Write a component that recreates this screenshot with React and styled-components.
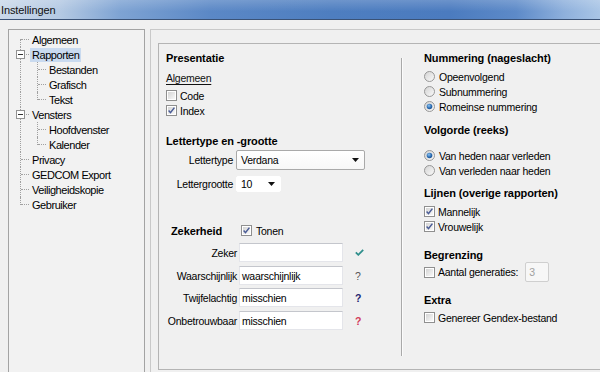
import React from 'react'
import styled, { createGlobalStyle } from 'styled-components'

const GlobalStyle = createGlobalStyle`
  html, body {
    margin: 0;
    padding: 0;
    background: #f0f0f0;
  }
  body {
    width: 600px;
    height: 372px;
    overflow: hidden;
    font-family: "Liberation Sans", Arial, sans-serif;
    font-size: 10.5px;
    letter-spacing: -0.25px;
    color: #000;
  }
`

const Window = styled.div`
  display: flex;
  flex-direction: column;
  width: 600px;
  height: 372px;
  overflow: hidden;
`

const TitleBar = styled.div`
  height: 19px;
  flex-shrink: 0;
  display: flex;
  align-items: center;
  padding-left: 1px;
  font-size: 11px;
  letter-spacing: -0.1px;
  color: #101010;
  border-bottom: 1px solid #3a5276;
  background:
    linear-gradient(180deg, rgba(255,255,255,0.18) 0%, rgba(255,255,255,0) 60%),
    linear-gradient(90deg, #cbd9ea 0%, #b4c9e3 10%, #7ea3d3 20%, #5b88c6 35%, #4e7ec0 55%, #4b7bbf 75%, #5d8ac8 86%, #8eb0dc 94%, #a9c5e6 100%);
`

const Body = styled.div`
  flex: 1;
  display: flex;
  gap: 5px;
  padding: 9px 0 0 8px;
  min-height: 0;
`

const TreePanel = styled.div`
  width: 137px;
  flex-shrink: 0;
  box-sizing: border-box;
  border: 1px solid #a3a3a3;
  border-bottom: none;
  background: #f2f2f2;
  padding: 2px 0 0 4px;
`

const TreeRow = styled.div`
  display: flex;
  align-items: center;
  height: 15px;
`

const Guide = styled.div`
  position: relative;
  width: 17px;
  height: 15px;
  flex-shrink: 0;

  &::before {
    content: '';
    display: ${p => (p.$line ? 'block' : 'none')};
    position: absolute;
    left: 7px;
    top: ${p => (p.$line === 'first' ? '7px' : '0')};
    height: ${p => (p.$line === 'first' || p.$line === 'last' ? '8px' : '15px')};
    border-left: 1px dotted #a0a0a0;
  }

  &::after {
    content: '';
    display: ${p => (p.$branch ? 'block' : 'none')};
    position: absolute;
    left: 8px;
    top: 7px;
    width: 8px;
    border-top: 1px dotted #a0a0a0;
  }
`

const Expander = styled.svg`
  position: absolute;
  left: 3px;
  top: 3px;
  z-index: 1;
`

const TreeLabel = styled.span`
  padding: 0 2px;
  height: 14px;
  line-height: 14px;
  white-space: nowrap;
  font-size: 11px;
  letter-spacing: -0.45px;
  background: ${p => (p.$selected ? '#c9daef' : 'transparent')};
`

const OuterPanel = styled.div`
  flex: 1;
  display: flex;
  flex-direction: column;
  border-left: 1px solid #c9c9c9;
  border-top: 1px solid #c9c9c9;
  padding: 13px 0 2px 7px;
  min-width: 0;
`

const InnerPanel = styled.div`
  flex: 1;
  display: flex;
  border: 1px solid #b4b4b4;
  border-right: none;
  margin-right: -20px;
  background: #f0f0f0;
`

const LeftCol = styled.div`
  width: 242px;
  flex-shrink: 0;
  box-sizing: border-box;
  padding-left: 7px;
  display: flex;
  flex-direction: column;
`

const Divider = styled.div`
  width: 1px;
  margin: 14px 0 13px;
  background: #a9a9a9;
  box-shadow: 1px 0 0 #fbfbfb;
`

const RightCol = styled.div`
  flex: 1;
  padding-left: 22px;
  display: flex;
  flex-direction: column;
`

const Heading = styled.div`
  margin-top: ${p => p.$top || 0}px;
  height: 14px;
  line-height: 14px;
  font-weight: bold;
  font-size: 11px;
  letter-spacing: -0.1px;
  white-space: nowrap;
`

const SubLink = styled.div`
  margin-top: ${p => p.$top || 0}px;
  height: 14px;
  line-height: 14px;
  text-decoration: underline;
  text-underline-offset: 2px;
  color: #111;
`

const OptionRow = styled.div`
  margin-top: ${p => p.$top || 0}px;
  height: ${p => p.$h || 15}px;
  display: flex;
  align-items: center;
  white-space: nowrap;
`

const OptionText = styled.span`
  margin-left: ${p => p.$gap || 3}px;
  line-height: 14px;
`

const FormRow = styled.div`
  margin-top: ${p => p.$top || 0}px;
  height: ${p => p.$h}px;
  display: flex;
  align-items: center;
`

const FieldLabel = styled.span`
  width: ${p => p.$w}px;
  text-align: right;
  margin-right: ${p => p.$gap}px;
  white-space: nowrap;
  flex-shrink: 0;
`

const Combo = styled.div`
  box-sizing: border-box;
  width: ${p => p.$w}px;
  height: 100%;
  display: flex;
  align-items: center;
  justify-content: space-between;
  padding: 0 5px 0 4px;
  border: 1px solid ${p => (p.$flat ? '#ffffff' : '#a9a9a9')};
  border-radius: 2px;
  background: ${p => (p.$flat ? '#ffffff' : 'linear-gradient(180deg, #ffffff 0%, #f7f7f7 100%)')};
`

const ZekerRow = styled.div`
  margin-top: 31px;
  height: 15px;
  display: flex;
  align-items: center;
  padding-left: 5px;
`

const ZekerHeading = styled.span`
  width: 70px;
  font-weight: bold;
  font-size: 11px;
  letter-spacing: -0.1px;
`

const TextField = styled.div`
  box-sizing: border-box;
  width: 104px;
  height: 100%;
  padding: 0 2px;
  display: flex;
  align-items: center;
  background: #fff;
  border: 1px solid #e4e5ea;
  border-top-color: #c4c6cc;
`

const Marker = styled.span`
  margin-left: 12px;
  width: 10px;
  display: flex;
  align-items: center;
  font-weight: ${p => (p.$bold ? 'bold' : 'normal')};
  color: ${p => p.$color};
`

const SmallInput = styled.div`
  box-sizing: border-box;
  margin-left: 7px;
  width: 24px;
  height: 20px;
  padding-left: 3px;
  display: flex;
  align-items: center;
  border: 1px solid #cfcfcf;
  border-radius: 2px;
  background: #f7f7f7;
  color: #a0a0a0;
`

const CheckBox = ({ checked }) => (
  <svg width="11" height="11" viewBox="0 0 11 11">
    <defs>
      <linearGradient id="cbfill" x1="0" y1="0" x2="1" y2="1">
        <stop offset="0" stopColor="#d4d4d4" />
        <stop offset="1" stopColor="#f9f9f9" />
      </linearGradient>
    </defs>
    <rect x="0.5" y="0.5" width="10" height="10" fill="#fff" stroke="#8f8f8f" />
    <rect x="2" y="2" width="7" height="7" fill="url(#cbfill)" />
    {checked && (
      <path d="M2.6 5.6 L4.5 7.7 L8.4 2.6" fill="none" stroke="#4a5c96" strokeWidth="1.5" />
    )}
  </svg>
)

const RadioDot = ({ checked }) => (
  <svg width="11" height="11" viewBox="0 0 11 11">
    <defs>
      <linearGradient id="rbfill" x1="0" y1="0" x2="1" y2="1">
        <stop offset="0" stopColor="#d2d2d2" />
        <stop offset="1" stopColor="#fbfbfb" />
      </linearGradient>
      <radialGradient id="rbdot" cx="0.4" cy="0.35" r="0.7">
        <stop offset="0" stopColor="#8fc3f0" />
        <stop offset="0.6" stopColor="#2d6fb5" />
        <stop offset="1" stopColor="#1f4f8a" />
      </radialGradient>
    </defs>
    <circle cx="5.5" cy="5.5" r="5" fill="url(#rbfill)" stroke="#979797" />
    {checked && <circle cx="5.5" cy="5.5" r="2.8" fill="url(#rbdot)" />}
  </svg>
)

const DropArrow = () => (
  <svg width="7" height="4" viewBox="0 0 7 4">
    <path d="M0 0 H7 L3.5 4 Z" fill="#111" />
  </svg>
)

const Check = ({ label, checked, top, gap }) => (
  <OptionRow $top={top}>
    <CheckBox checked={checked} />
    <OptionText $gap={gap}>{label}</OptionText>
  </OptionRow>
)

const Radio = ({ label, checked, top }) => (
  <OptionRow $top={top}>
    <RadioDot checked={checked} />
    <OptionText $gap={4}>{label}</OptionText>
  </OptionRow>
)

const tree = [
  { label: 'Algemeen', guides: [{ line: 'first', branch: true }] },
  { label: 'Rapporten', guides: [{ line: 'mid', branch: true, box: true }], selected: true },
  { label: 'Bestanden', guides: [{ line: 'mid' }, { line: 'mid', branch: true }] },
  { label: 'Grafisch', guides: [{ line: 'mid' }, { line: 'mid', branch: true }] },
  { label: 'Tekst', guides: [{ line: 'mid' }, { line: 'last', branch: true }] },
  { label: 'Vensters', guides: [{ line: 'mid', branch: true, box: true }] },
  { label: 'Hoofdvenster', guides: [{ line: 'mid' }, { line: 'mid', branch: true }] },
  { label: 'Kalender', guides: [{ line: 'mid' }, { line: 'last', branch: true }] },
  { label: 'Privacy', guides: [{ line: 'mid', branch: true }] },
  { label: 'GEDCOM Export', guides: [{ line: 'mid', branch: true }] },
  { label: 'Veiligheidskopie', guides: [{ line: 'mid', branch: true }] },
  { label: 'Gebruiker', guides: [{ line: 'last', branch: true }] },
]

const certainty = [
  { label: 'Zeker', value: '', top: 5, mark: 'check' },
  { label: 'Waarschijnlijk', value: 'waarschijnlijk', top: 4, mark: '?', color: '#555' },
  { label: 'Twijfelachtig', value: 'misschien', top: 3, mark: '?', color: '#1d2570', bold: true },
  { label: 'Onbetrouwbaar', value: 'misschien', top: 4, mark: '?', color: '#d23a5a', bold: true },
]

const App = () => (
  <Window>
    <GlobalStyle />
    <TitleBar>Instellingen</TitleBar>
    <Body>
      <TreePanel>
        {tree.map(item => (
          <TreeRow key={item.label}>
            {item.guides.map((g, i) => (
              <Guide key={i} $line={g.line} $branch={g.branch}>
                {g.box && (
                  <Expander width="9" height="9" viewBox="0 0 9 9">
                    <rect x="0.5" y="0.5" width="8" height="8" fill="#fff" stroke="#929292" />
                    <path d="M2 4.5 H7" stroke="#333" />
                  </Expander>
                )}
              </Guide>
            ))}
            <TreeLabel $selected={item.selected}>{item.label}</TreeLabel>
          </TreeRow>
        ))}
      </TreePanel>

      <OuterPanel>
        <InnerPanel>
          <LeftCol>
            <Heading $top={7}>Presentatie</Heading>
            <SubLink $top={6}>Algemeen</SubLink>
            <Check top={3} label="Code" />
            <Check label="Index" checked />

            <Heading $top={16}>Lettertype en -grootte</Heading>
            <FormRow $top={2} $h={20}>
              <FieldLabel $w={67} $gap={3}>Lettertype</FieldLabel>
              <Combo $w={129}>
                <span>Verdana</span>
                <DropArrow />
              </Combo>
            </FormRow>
            <FormRow $top={6} $h={16}>
              <FieldLabel $w={67} $gap={3}>Lettergrootte</FieldLabel>
              <Combo $w={45} $flat>
                <span>10</span>
                <DropArrow />
              </Combo>
            </FormRow>

            <ZekerRow>
              <ZekerHeading>Zekerheid</ZekerHeading>
              <CheckBox checked />
              <OptionText $gap={4}>Tonen</OptionText>
            </ZekerRow>
            {certainty.map(row => (
              <FormRow key={row.label} $top={row.top} $h={19}>
                <FieldLabel $w={71} $gap={2}>{row.label}</FieldLabel>
                <TextField>{row.value}</TextField>
                <Marker $color={row.color} $bold={row.bold}>
                  {row.mark === 'check' ? (
                    <svg width="9" height="7" viewBox="0 0 9 7">
                      <path d="M0.8 3.4 L3.3 5.8 L8.2 0.8" fill="none" stroke="#2f8f8c" strokeWidth="1.8" />
                    </svg>
                  ) : (
                    row.mark
                  )}
                </Marker>
              </FormRow>
            ))}
          </LeftCol>

          <Divider />

          <RightCol>
            <Heading $top={7}>Nummering (nageslacht)</Heading>
            <Radio top={4} label="Opeenvolgend" />
            <Radio label="Subnummering" />
            <Radio label="Romeinse nummering" checked />

            <Heading $top={9}>Volgorde (reeks)</Heading>
            <Radio top={11} label="Van heden naar verleden" checked />
            <Radio label="Van verleden naar heden" />

            <Heading $top={8}>Lijnen (overige rapporten)</Heading>
            <Check top={4} label="Mannelijk" checked gap={3} />
            <Check label="Vrouwelijk" checked gap={3} />

            <Heading $top={14}>Begrenzing</Heading>
            <OptionRow $h={20}>
              <CheckBox />
              <OptionText $gap={3}>Aantal generaties:</OptionText>
              <SmallInput>3</SmallInput>
            </OptionRow>

            <Heading $top={11}>Extra</Heading>
            <Check top={3} label="Genereer Gendex-bestand" gap={3} />
          </RightCol>
        </InnerPanel>
      </OuterPanel>
    </Body>
  </Window>
)

export default App
